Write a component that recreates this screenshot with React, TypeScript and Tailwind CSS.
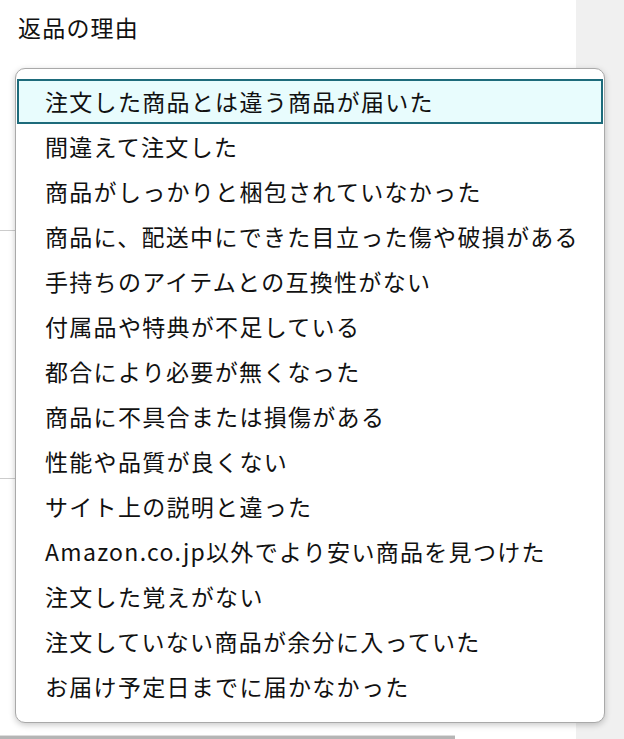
import React from 'react';

const reasons = [
  '注文した商品とは違う商品が届いた',
  '間違えて注文した',
  '商品がしっかりと梱包されていなかった',
  '商品に、配送中にできた目立った傷や破損がある',
  '手持ちのアイテムとの互換性がない',
  '付属品や特典が不足している',
  '都合により必要が無くなった',
  '商品に不具合または損傷がある',
  '性能や品質が良くない',
  'サイト上の説明と違った',
  'Amazon.co.jp以外でより安い商品を見つけた',
  '注文した覚えがない',
  '注文していない商品が余分に入っていた',
  'お届け予定日までに届かなかった',
];

export default function App() {
  return (
    <div
      className="relative flex w-[624px] h-[739px] overflow-hidden bg-white text-[#111111]"
      style={{ fontFamily: '"Noto Sans CJK JP", "Noto Sans", sans-serif' }}
    >
      {/* page underneath */}
      <div className="flex w-[576px] flex-col">
        <div className="pl-[18px] pt-[11px] text-[23px] leading-[32px] tracking-[1.2px]">返品の理由</div>
        <div className="mt-[187px] h-[248px] border-t border-[#cccccc]" />
        <div className="flex-1 border-t border-[#cccccc]" />
        <div className="w-[455px] border-t border-[#dddddd]">
          <div className="h-[3px] bg-[#b5b5b5]" />
        </div>
      </div>
      <div className="flex-1 bg-[#f0f0f0]" />

      {/* dropdown list */}
      <div className="absolute left-[15px] top-[68px] w-[590px] h-[655px] rounded-[10px] border border-[#a9a9a9] bg-white pt-[10px] shadow-[0_2px_6px_rgba(0,0,0,0.22)]">
        {reasons.map((r, i) => (
          <div
            key={r}
            className={`mx-[1px] flex h-[45px] items-center border-2 pl-[26px] text-[23px] tracking-[1.3px] whitespace-nowrap ${
              i === 0 ? 'border-[#1d6b7b] bg-[#e8fcfd]' : 'border-transparent'
            }`}
          >
            {r}
          </div>
        ))}
      </div>
    </div>
  );
}
